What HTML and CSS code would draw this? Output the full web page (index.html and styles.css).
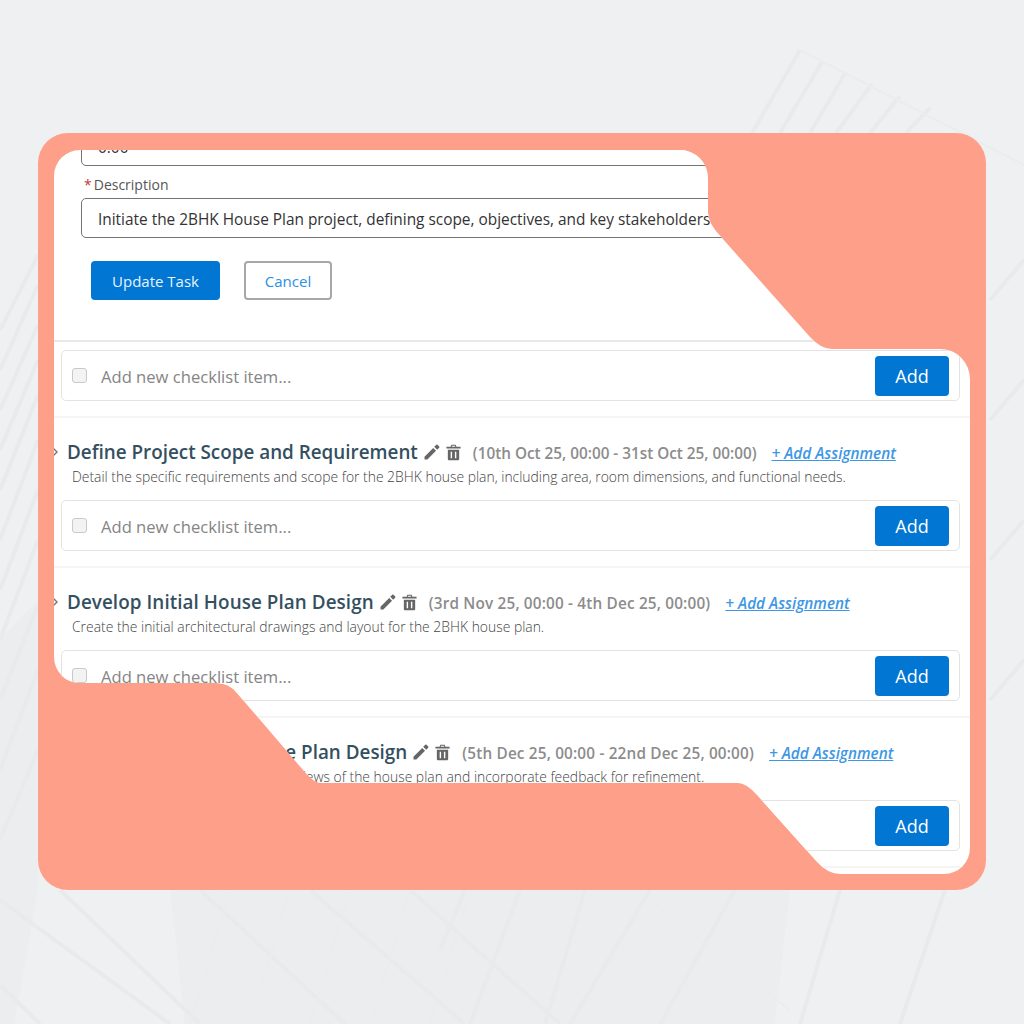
FILE: index.html
```html
<!DOCTYPE html>
<html lang="en">
<head>
    <meta charset="UTF-8">
    <title>Task checklist</title>
    <link rel="stylesheet" href="styles.css">
</head>
<body>
    <svg class="backdrop" viewBox="0 0 1024 1024" aria-hidden="true">
        <polygon class="bd-shade" points="170,890 790,890 775,1024 185,1024"/>
        <polygon class="bd-shade" points="0,640 38,600 38,890 14,1024 0,1024"/>
        <g class="bd-line">
            <path d="M800 50L752 133M822 62L780 133M846 72L810 133M872 84L836 133M900 96L870 133M930 108L906 133"/>
            <path d="M60 890L200 1024M200 890L345 1024M310 890L465 1024M410 890L560 1024"/>
            <path d="M465 890L440 950M520 890L470 1024M585 890L545 1024M650 890L570 1024M735 890L660 1024M840 890L800 1024M945 890L900 1024"/>
            <path d="M0 985L40 1024M0 900L170 1024"/>
            <path d="M0 330L38 255M0 370L38 285M0 410L38 325M0 450L38 360M0 490L38 395M0 540L38 440M0 590L38 490M0 640L38 540M0 700L38 605M0 770L38 670M0 840L38 750"/>
            <path d="M990 300L1024 260M990 420L1024 380M990 560L1024 520M990 700L1024 660"/>
        </g>
        <g class="bd-thin">
            <path d="M800 50L1024 165"/>
            <path d="M230 890L190 1024M290 890L250 1024M350 890L310 1024M410 890L370 1024M470 890L430 1024"/>
            <path d="M560 900L740 1024M650 900L790 1010"/>
        </g>
    </svg>

    <svg class="sprite" aria-hidden="true">
        <symbol id="icon-pencil" viewBox="0 0 24 24">
            <path d="M2 18.2V22h3.800L17.400 10.400l-3.800-3.800L2 18.200zM21.600 6.300c.5-.5.5-1.100 0-1.600l-2.300-2.300c-.5-.5-1.100-.5-1.600 0l-2.700 2.700 3.900 3.900 2.700-2.700z"/>
        </symbol>
        <symbol id="icon-trash" viewBox="0 0 24 24">
            <path fill-rule="evenodd" d="M9 1h6l1.200 3H22v2.400H2V4h5.800L9 1zm.9 1.600L9.500 4h5l-.4-1.400H9.900zM4 8h16v13c0 1.300-.9 2-2 2H6c-1.100 0-2-.7-2-2V8zm4 3v9h2v-9H8zm6 0v9h2v-9h-2z"/>
        </symbol>
    </svg>

    <main class="card">
        <div class="panel">
            <form class="task-form">
                <input class="field" type="text" value="0.00">
                <label class="field-label"><span class="req">*</span>Description</label>
                <input class="field" type="text" value="Initiate the 2BHK House Plan project, defining scope, objectives, and key stakeholders">
                <div class="form-actions">
                    <button class="btn btn-primary" type="button">Update Task</button>
                    <button class="btn btn-outline" type="button">Cancel</button>
                </div>
            </form>

            <section class="task task-first">
                <div class="checklist">
                    <input class="check" type="checkbox">
                    <input class="check-input" type="text" placeholder="Add new checklist item...">
                    <button class="btn btn-add" type="button">Add</button>
                </div>
            </section>

            <section class="task">
                <div class="task-head">
                    <svg class="chevron" viewBox="0 0 6 10"><path d="M1 1l4 4-4 4"/></svg>
                    <h2 class="task-title">Define Project Scope and Requirement</h2>
                    <svg class="icon icon-edit"><use href="#icon-pencil"/></svg>
                    <svg class="icon icon-del"><use href="#icon-trash"/></svg>
                    <span class="task-dates dates-tight">(10th Oct 25, 00:00 - 31st Oct 25, 00:00)</span>
                    <a class="assign" href="#">+ Add Assignment</a>
                </div>
                <p class="task-desc">Detail the specific requirements and scope for the 2BHK house plan, including area, room dimensions, and functional needs.</p>
                <div class="checklist">
                    <input class="check" type="checkbox">
                    <input class="check-input" type="text" placeholder="Add new checklist item...">
                    <button class="btn btn-add" type="button">Add</button>
                </div>
            </section>

            <section class="task">
                <div class="task-head">
                    <svg class="chevron" viewBox="0 0 6 10"><path d="M1 1l4 4-4 4"/></svg>
                    <h2 class="task-title title-wide">Develop Initial House Plan Design</h2>
                    <svg class="icon icon-edit"><use href="#icon-pencil"/></svg>
                    <svg class="icon icon-del"><use href="#icon-trash"/></svg>
                    <span class="task-dates">(3rd Nov 25, 00:00 - 4th Dec 25, 00:00)</span>
                    <a class="assign" href="#">+ Add Assignment</a>
                </div>
                <p class="task-desc">Create the initial architectural drawings and layout for the 2BHK house plan.</p>
                <div class="checklist">
                    <input class="check" type="checkbox">
                    <input class="check-input" type="text" placeholder="Add new checklist item...">
                    <button class="btn btn-add" type="button">Add</button>
                </div>
            </section>

            <section class="task">
                <div class="task-head">
                    <svg class="chevron" viewBox="0 0 6 10"><path d="M1 1l4 4-4 4"/></svg>
                    <h2 class="task-title">Review and Refine House Plan Design</h2>
                    <svg class="icon icon-edit"><use href="#icon-pencil"/></svg>
                    <svg class="icon icon-del"><use href="#icon-trash"/></svg>
                    <span class="task-dates">(5th Dec 25, 00:00 - 22nd Dec 25, 00:00)</span>
                    <a class="assign" href="#">+ Add Assignment</a>
                </div>
                <p class="task-desc">Generate detailed drawings and 3D views of the house plan and incorporate feedback for refinement.</p>
                <div class="checklist">
                    <input class="check" type="checkbox">
                    <input class="check-input" type="text" placeholder="Add new checklist item...">
                    <button class="btn btn-add" type="button">Add</button>
                </div>
            </section>
        </div>
    </main>
</body>
</html>
```

FILE: styles.css
```css
html, body {
    margin: 0;
    height: 100%;
}

body {
    position: relative;
    overflow: hidden;
    background: #eff0f2;
    font-family: "Open Sans", "Noto Sans", sans-serif;
    padding: 133px 38px 0;
    box-sizing: border-box;
}

.backdrop {
    position: absolute;
    left: 0;
    top: 0;
    width: 1024px;
    height: 1024px;
}
.bd-shade { fill: #ecedef; }
.bd-line {
    fill: none;
    stroke: #e9eaec;
    stroke-width: 4;
}
.bd-thin {
    fill: none;
    stroke: #ebecee;
    stroke-width: 2;
}

.sprite {
    position: absolute;
    width: 0;
    height: 0;
}

.card {
    position: relative;
    width: 948px;
    height: 757px;
    box-sizing: border-box;
    padding: 17px 16px;
    background: #fe9f89;
    border-radius: 30px;
}

.panel {
    width: 916px;
    height: 724px;
    overflow: hidden;
    background: white;
    clip-path: path("M0 26A26 26 0 0 1 26 0H626A28 28 0 0 1 654 28V63Q654 74 668 88L756 187Q767 199 778 199H886A30 30 0 0 1 916 229V698A26 26 0 0 1 890 724H786Q774 724 763 712L703 645Q692 633 684 633H266Q260 633 249 620L183 543Q175 533 163 533H26A26 26 0 0 1 0 507Z");
}

/* edit form, scrolled so the first field is cut off */
.task-form {
    margin-top: -24px;
    padding: 0 0 40px 27px;
    border-bottom: 2px solid #e9e9e9;
}

.field {
    display: block;
    width: 860px;
    height: 40px;
    box-sizing: border-box;
    padding: 3px 16px 0;
    border: 1px solid #747474;
    border-radius: 5px;
    font-family: inherit;
    font-size: 15.4px;
    color: #333;
    background: white;
}

.field-label {
    display: block;
    margin: 9px 0 3px 3px;
    font-size: 14px;
    line-height: 20px;
    color: #555;
}
.req {
    margin-right: 2px;
    color: #c23934;
}

.form-actions {
    display: flex;
    gap: 24px;
    margin: 23px 0 0 10px;
}

.btn {
    height: 39px;
    box-sizing: border-box;
    border-radius: 4px;
    font-family: inherit;
    font-size: 15px;
    cursor: pointer;
}
.btn-primary {
    width: 129px;
    border: none;
    background: #0176d3;
    color: #e8f3fb;
}
.btn-outline {
    width: 88px;
    border: 2px solid #a8a8a8;
    background: white;
    color: #2a90e4;
}
.btn-add {
    width: 74px;
    height: 40px;
    border: none;
    background: #0176d3;
    color: white;
    font-size: 18px;
}

.task {
    padding: 0 10px 15px 7px;
    border-bottom: 2px solid #f5f5f5;
}
.task-first { padding-top: 8px; }

.task-head {
    display: flex;
    align-items: center;
    height: 30px;
    padding-top: 19px;
}

.chevron {
    width: 6px;
    height: 10px;
    margin: 0 9px 0 -9px;
    fill: none;
    stroke: #777;
    stroke-width: 1.5;
}

.task-title {
    margin: 0;
    font-size: 18.85px;
    font-weight: 600;
    color: #34505f;
    white-space: nowrap;
}
.title-wide { letter-spacing: 0.07px; }

.icon {
    fill: #666;
    flex: none;
}
.icon-edit {
    width: 18px;
    height: 18px;
    margin-left: 5px;
}
.icon-del {
    width: 17px;
    height: 17px;
    margin-left: 4px;
}

.task-dates {
    margin: 2px 0 0 11px;
    font-size: 15.3px;
    font-weight: 600;
    letter-spacing: 0.18px;
    color: #8c8c8c;
    white-space: nowrap;
}
.dates-tight { letter-spacing: 0; }

.assign {
    margin: 2px 0 0 15px;
    font-size: 15.3px;
    font-weight: 600;
    font-style: italic;
    color: #3d97e4;
    white-space: nowrap;
}

.task-desc {
    margin: 0 0 13px 11px;
    font-size: 13.9px;
    line-height: 20px;
    font-weight: 300;
    color: #444;
    white-space: nowrap;
}

.checklist {
    display: flex;
    align-items: center;
    height: 51px;
    box-sizing: border-box;
    padding: 0 10px;
    border: 1.5px solid #e3e3e3;
    border-radius: 5px;
    background: white;
}

.check {
    appearance: none;
    flex: none;
    width: 15px;
    height: 15px;
    margin: 0 14px 0 0;
    border: 1px solid #c9c9c9;
    border-radius: 3px;
    background: #f3f3f3;
}

.check-input {
    flex: 1;
    min-width: 0;
    border: none;
    outline: none;
    padding: 2px 0 0;
    font-family: inherit;
    font-size: 16.6px;
    background: transparent;
}
.check-input::placeholder {
    color: #858585;
    opacity: 1;
}
```
